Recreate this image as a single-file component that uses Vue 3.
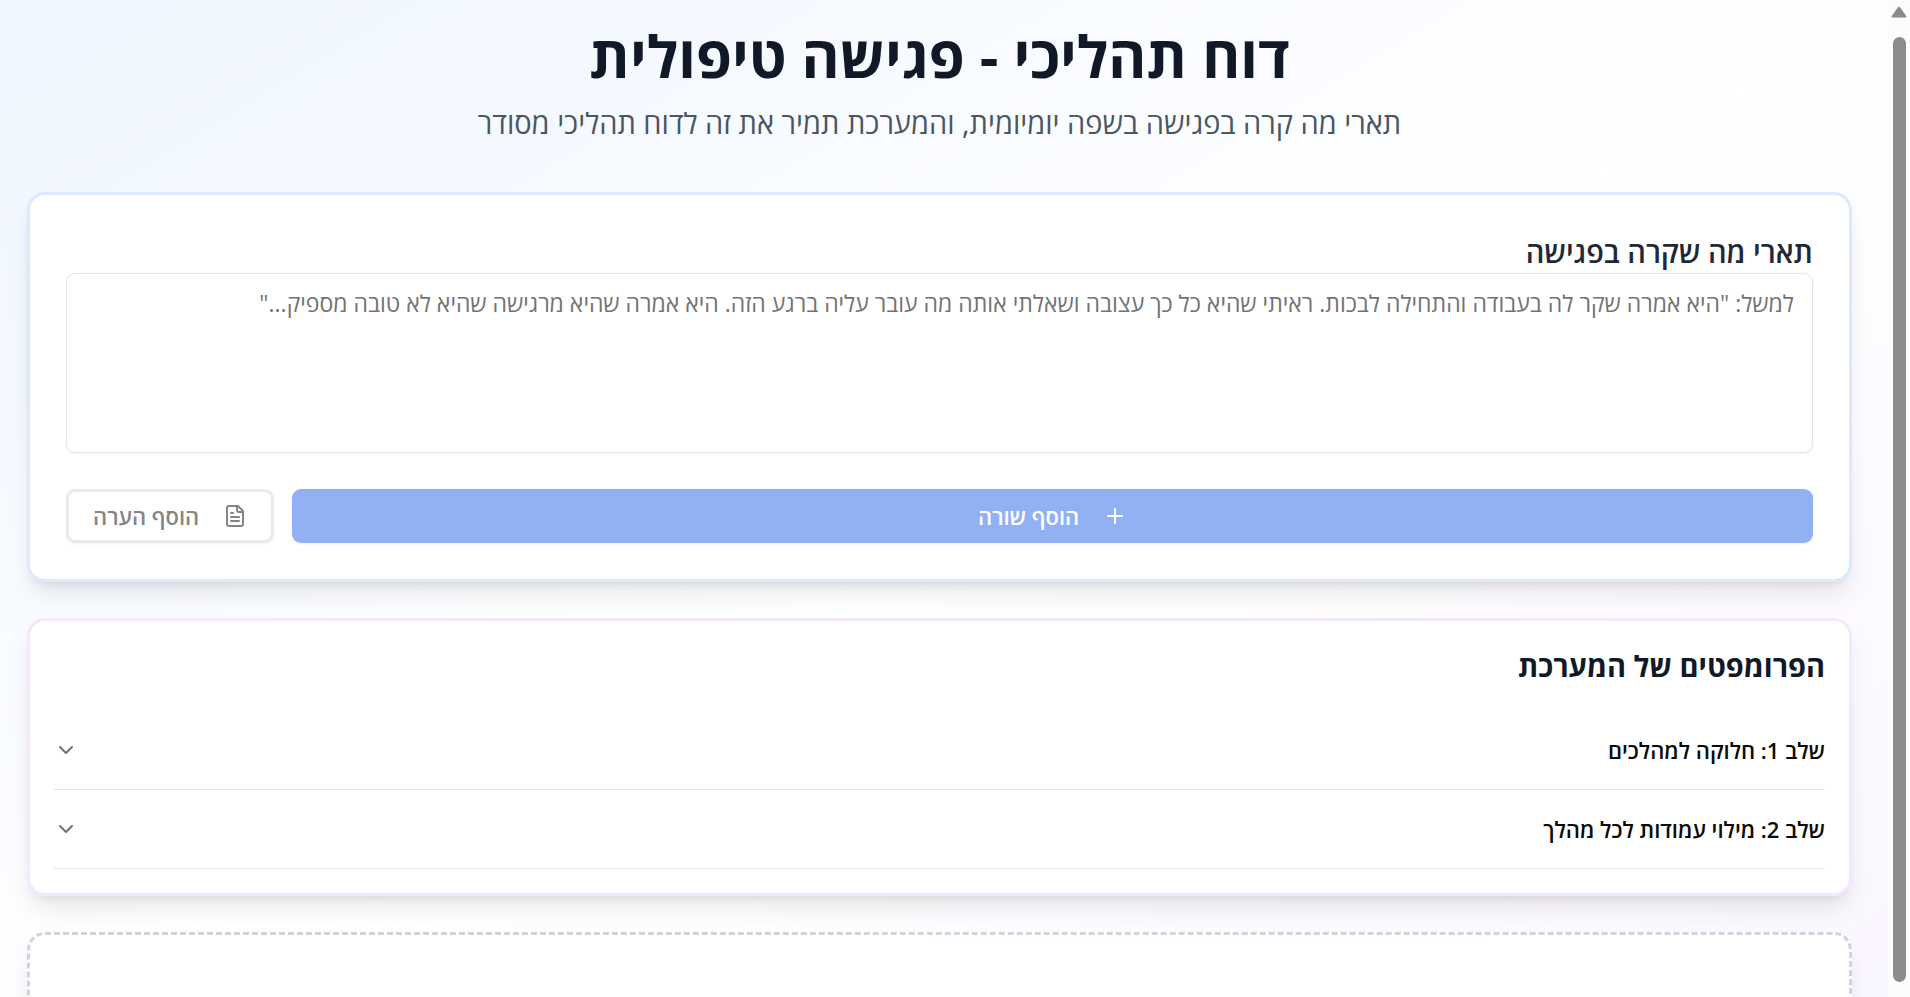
<script setup>
import { ref } from 'vue'

const description = ref('')
const placeholder =
  'למשל: "היא אמרה שקר לה בעבודה והתחילה לבכות. ראיתי שהיא כל כך עצובה ושאלתי אותה מה עובר עליה ברגע הזה. היא אמרה שהיא מרגישה שהיא לא טובה מספיק..."'
const steps = ['שלב 1: חלוקה למהלכים', 'שלב 2: מילוי עמודות לכל מהלך']
</script>

<template>
  <div class="viewport" dir="rtl">
    <div class="page">
      <header class="header">
        <h1>דוח תהליכי - פגישה טיפולית</h1>
        <p>תארי מה קרה בפגישה בשפה יומיומית, והמערכת תמיר את זה לדוח תהליכי מסודר</p>
      </header>

      <main class="cards">
        <section class="card entry">
          <label for="description">תארי מה שקרה בפגישה</label>
          <textarea id="description" v-model="description" :placeholder="placeholder"></textarea>
          <div class="actions">
            <button type="button" class="primary" disabled>
              <svg class="icon" viewBox="0 0 24 24"><path d="M5 12h14" /><path d="M12 5v14" /></svg>
              <span>הוסף שורה</span>
            </button>
            <button type="button" class="outline" disabled>
              <svg class="icon" viewBox="0 0 24 24">
                <path d="M15 2H6a2 2 0 0 0-2 2v16a2 2 0 0 0 2 2h12a2 2 0 0 0 2-2V7Z" />
                <path d="M14 2v4a2 2 0 0 0 2 2h4" />
                <path d="M10 9H8" />
                <path d="M16 13H8" />
                <path d="M16 17H8" />
              </svg>
              <span>הוסף הערה</span>
            </button>
          </div>
        </section>

        <section class="card prompts">
          <h2>הפרומפטים של המערכת</h2>
          <button v-for="step in steps" :key="step" type="button" class="step">
            <span>{{ step }}</span>
            <svg class="icon" viewBox="0 0 24 24"><path d="m6 9 6 6 6-6" /></svg>
          </button>
        </section>

        <section class="card empty"></section>
      </main>
    </div>

    <div class="scrollbar" aria-hidden="true">
      <svg class="arrow" viewBox="0 0 16 12"><path d="M8 1.5 14.5 10.5h-13Z" /></svg>
      <div class="thumb"></div>
    </div>
  </div>
</template>

<style>
body {
  margin: 0;
  overflow: hidden;
}
</style>

<style scoped>
* {
  box-sizing: border-box;
}
.viewport {
  display: flex;
  flex-direction: row-reverse;
  height: 100vh;
  overflow: hidden;
  font-family: "Open Sans", "Noto Sans", sans-serif;
  background: #fcfcfc;
}
.scrollbar {
  order: 2;
  flex: 0 0 22px;
  display: flex;
  flex-direction: column;
  align-items: center;
  gap: 19px;
  padding: 6px 0 15px;
}
.arrow {
  width: 16px;
  height: 12px;
  fill: #8b8b8b;
  stroke: #8b8b8b;
  stroke-width: 2;
  stroke-linejoin: round;
}
.thumb {
  flex: 1;
  width: 13px;
  border-radius: 7px;
  background: #8b8b8b;
}
.page {
  order: 1;
  flex: 1;
  align-self: flex-start;
  min-width: 0;
  padding: 24px 36px 36px 27px;
  background: linear-gradient(to bottom right, #eff6ff, #ffffff, #faf5ff);
}
.header {
  margin-bottom: 48px;
  text-align: center;
}
h1 {
  margin: 0 0 14px;
  font-size: 58px;
  line-height: 64px;
  font-weight: 700;
  color: #111827;
}
.header p {
  margin: 0;
  font-size: 29px;
  line-height: 42px;
  color: #4b5563;
}
.cards {
  display: flex;
  flex-direction: column;
  gap: 36px;
}
.card {
  border: 3px solid;
  border-radius: 18px;
  background: #fff;
  box-shadow: 0 15px 23px -5px rgba(0, 0, 0, 0.1), 0 6px 9px -6px rgba(0, 0, 0, 0.1);
}
.entry {
  padding: 36px;
  border-color: #dbeafe;
}
label {
  display: block;
  font-size: 29px;
  line-height: 42px;
  font-weight: 600;
  color: #1f2937;
}
textarea {
  display: block;
  width: 100%;
  height: 180px;
  padding: 12px 18px;
  border: 1px solid #e5e5e5;
  border-radius: 9px;
  outline: none;
  resize: none;
  overflow: hidden;
  font: 400 23px/34px "Open Sans", "Noto Sans", sans-serif;
  color: #0a0a0a;
  box-shadow: 0 1px 3px rgba(0, 0, 0, 0.05);
}
textarea::placeholder {
  color: #737373;
  opacity: 1;
}
.actions {
  display: flex;
  gap: 18px;
  margin-top: 36px;
}
.actions button {
  display: flex;
  align-items: center;
  justify-content: center;
  gap: 24px;
  height: 54px;
  padding: 0 24px;
  border: 0;
  border-radius: 9px;
  font: 600 22px/34px "Open Sans", "Noto Sans", sans-serif;
  box-shadow: 0 1px 3px rgba(0, 0, 0, 0.05);
}
.actions .primary {
  flex: 1;
  background: #92b1f5;
  color: #fff;
}
.actions .outline {
  border: 3px solid #e9eaef;
  background: #fff;
  color: #858585;
}
.icon {
  flex: none;
  width: 24px;
  height: 24px;
  fill: none;
  stroke: currentColor;
  stroke-width: 2;
  stroke-linecap: round;
  stroke-linejoin: round;
}
.prompts {
  padding: 24px;
  border-color: #f3e8ff;
}
h2 {
  margin: 0 0 24px;
  font-size: 29px;
  line-height: 42px;
  font-weight: 700;
  color: #111827;
}
.step {
  display: flex;
  align-items: center;
  justify-content: space-between;
  width: 100%;
  height: 79px;
  padding: 0;
  border: 0;
  border-bottom: 1px solid #e5e5e5;
  background: none;
  font: 600 22px/34px "Open Sans", "Noto Sans", sans-serif;
  color: #0a0a0a;
}
.step .icon {
  color: #737373;
}
.empty {
  min-height: 160px;
  border-style: dashed;
  border-color: #d1d5db;
}
</style>
